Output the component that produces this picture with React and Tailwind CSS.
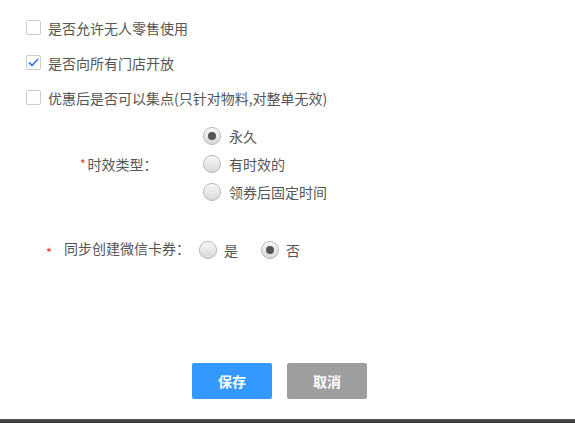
import React from "react";

function Checkbox({ checked, label }) {
  return (
    <div className="flex h-[35px] items-center">
      <div className="flex h-[15px] w-[15px] items-center justify-center rounded-[2px] border border-[#cccccc] bg-white">
        {checked && (
          <svg width="11" height="9" viewBox="0 0 11 9">
            <path d="M1 4.5 L4 7.5 L10 1" fill="none" stroke="#3d7fe0" strokeWidth="1.8" />
          </svg>
        )}
      </div>
      <span className="ml-[7px] text-[14px] leading-none text-[#555]">{label}</span>
    </div>
  );
}

function Radio({ checked }) {
  return (
    <div className="flex h-[18px] w-[18px] items-center justify-center rounded-full border border-[#b5b5b5] bg-gradient-to-b from-[#f7f7f7] to-[#d9d9d9] shadow-[inset_0_1px_1px_rgba(255,255,255,0.8)]">
      {checked && <div className="h-[8px] w-[8px] rounded-full bg-[#555]" />}
    </div>
  );
}

export default function App() {
  return (
    <div
      className="relative flex h-[423px] w-[575px] flex-col overflow-hidden bg-white text-[#555]"
      style={{ fontFamily: '"Noto Sans CJK SC", "Noto Sans", sans-serif' }}
    >
      <div className="flex flex-col pl-[26px] pt-[10px]">
        <Checkbox label="是否允许无人零售使用" />
        <Checkbox checked label="是否向所有门店开放" />
        <Checkbox label="优惠后是否可以集点(只针对物料,对整单无效)" />
      </div>

      <div className="mt-[7px] flex items-center">
        <div className="flex w-[203px] items-center pl-[80px] text-[14px]">
          <span className="mr-[2px] text-[12px] text-[#e4393c]">*</span>
          <span>时效类型：</span>
        </div>
        <div className="flex flex-col">
          {[
            ["永久", true],
            ["有时效的", false],
            ["领券后固定时间", false],
          ].map(([t, c]) => (
            <div key={t} className="flex h-[28px] items-center">
              <Radio checked={c} />
              <span className="ml-[8px] text-[14px]">{t}</span>
            </div>
          ))}
        </div>
      </div>

      <div className="mt-[30px] flex h-[28px] items-center">
        <div className="flex w-[199px] items-center pl-[46px] text-[14px]">
          <span className="mt-[5px] w-[18px] text-[13px] text-[#e4393c]">*</span>
          <span className="-mt-[3px]">同步创建微信卡券：</span>
        </div>
        <Radio />
        <span className="ml-[7px] text-[14px]">是</span>
        <div className="ml-[23px]">
          <Radio checked />
        </div>
        <span className="ml-[7px] text-[14px]">否</span>
      </div>

      <div className="mt-[99px] flex gap-[15px] pl-[192px]">
        <button className="h-[36px] w-[80px] rounded-[2px] bg-[#3399ff] text-[14px] font-bold text-white">
          保存
        </button>
        <button className="h-[36px] w-[80px] rounded-[2px] bg-[#9e9e9e] text-[14px] font-bold text-white">
          取消
        </button>
      </div>

      <div className="flex-1" />
      <div className="h-[4px] bg-gradient-to-b from-[#555] to-[#333]" />
    </div>
  );
}
